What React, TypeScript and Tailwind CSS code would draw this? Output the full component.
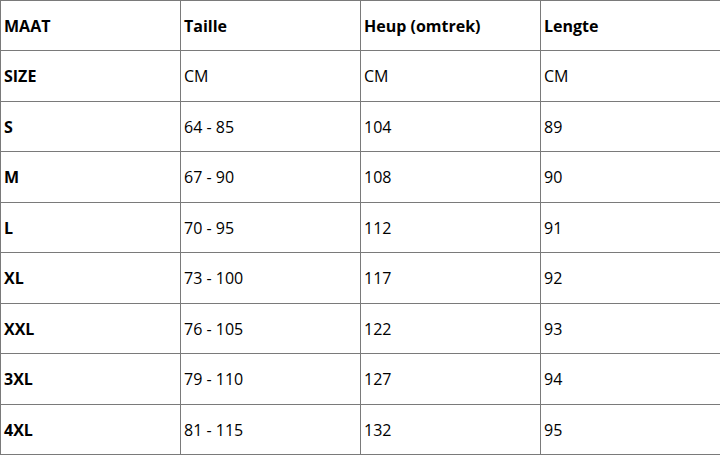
const rows: string[][] = [
  ["MAAT", "Taille", "Heup (omtrek)", "Lengte"],
  ["SIZE", "CM", "CM", "CM"],
  ["S", "64 - 85", "104", "89"],
  ["M", "67 - 90", "108", "90"],
  ["L", "70 - 95", "112", "91"],
  ["XL", "73 - 100", "117", "92"],
  ["XXL", "76 - 105", "122", "93"],
  ["3XL", "79 - 110", "127", "94"],
  ["4XL", "81 - 115", "132", "95"],
];

export default function App() {
  return (
    <div className="w-[720px] h-[455px] overflow-hidden bg-white font-['Open_Sans',sans-serif] text-[16px] text-black">
      <div className="grid grid-cols-[180px_180px_180px_180px] border-t border-l border-[#7a7a7a]">
        {rows.map((row, r) =>
          row.map((cell, c) => (
            <div
              key={`${r}-${c}`}
              className={`flex items-center pl-[3px] border-r border-b border-[#7a7a7a] ${
                r % 2 === 0 ? "h-[50px]" : "h-[51px]"
              } ${r === 0 || c === 0 ? "font-bold" : ""}`}
            >
              {cell}
            </div>
          ))
        )}
      </div>
    </div>
  );
}
